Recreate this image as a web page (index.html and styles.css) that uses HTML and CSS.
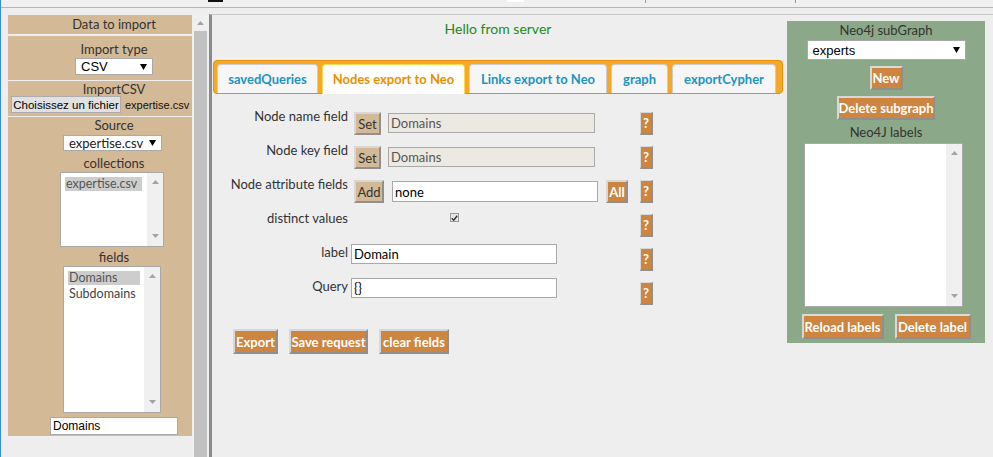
FILE: index.html
```html
<!DOCTYPE html>
<html lang="fr">
<head>
<meta charset="utf-8">
<title>Neo4j import</title>
<link rel="stylesheet" href="styles.css">
</head>
<body>
<div class="topbar">
  <span class="tb-mark tb-dark"></span>
  <span class="tb-mark tb-light"></span>
  <span class="tb-tick t1"></span>
  <span class="tb-tick t2"></span>
</div>
<div class="workspace">
  <aside class="leftpane">
    <div class="lp-clip">
      <section class="lp-sec lp-head">Data to import</section>
      <section class="lp-sec lp-type">
        <div class="lp-label">Import type</div>
        <div class="select sel-csv"><span>CSV</span><svg class="dd" width="7" height="6" viewBox="0 0 7 6"><path d="M0 0H7L3.5 6Z"/></svg></div>
      </section>
      <section class="lp-sec lp-file">
        <div class="lp-label">ImportCSV</div>
        <div class="file-row"><span class="file-btn">Choisissez un fichier</span><span class="file-name">expertise.csv</span></div>
      </section>
      <section class="lp-sec lp-source">
        <div class="lp-label">Source</div>
        <div class="select sel-src"><span>expertise.csv</span><svg class="dd" width="7" height="6" viewBox="0 0 7 6"><path d="M0 0H7L3.5 6Z"/></svg></div>
        <div class="lp-label lbl-coll">collections</div>
        <div class="listbox lb-coll">
          <div class="lb-items"><div class="lb-item sel">expertise.csv</div></div>
          <div class="lb-scroll"><svg width="7" height="4" viewBox="0 0 7 4"><path d="M0 4H7L3.5 0Z"/></svg><svg width="7" height="4" viewBox="0 0 7 4"><path d="M0 0H7L3.5 4Z"/></svg></div>
        </div>
        <div class="lp-label lbl-fields">fields</div>
        <div class="listbox lb-fields">
          <div class="lb-items"><div class="lb-item sel">Domains</div><div class="lb-item">Subdomains</div></div>
          <div class="lb-scroll"><svg width="7" height="4" viewBox="0 0 7 4"><path d="M0 4H7L3.5 0Z"/></svg><svg width="7" height="4" viewBox="0 0 7 4"><path d="M0 0H7L3.5 4Z"/></svg></div>
        </div>
        <input class="lp-input" type="text" value="Domains">
      </section>
    </div>
    <div class="vscroll">
      <div class="vs-up"><svg width="7" height="4" viewBox="0 0 7 4"><path d="M0 4H7L3.5 0Z"/></svg></div>
      <div class="vs-thumb"></div>
    </div>
  </aside>

  <main class="mainpane">
    <div class="center">
      <div class="hello">Hello from server</div>
      <nav class="tabs-nav">
        <div class="tab t-saved">savedQueries</div>
        <div class="tab t-nodes active">Nodes export to Neo</div>
        <div class="tab t-links">Links export to Neo</div>
        <div class="tab t-graph">graph</div>
        <div class="tab t-cypher">exportCypher</div>
      </nav>

      <div class="form">
        <div class="f-label">Node name field</div>
        <div class="f-ctrl"><button class="btn-tan b-set">Set</button><input class="f-input ro" type="text" value="Domains" readonly></div>
        <div class="f-help"><button class="btn help">?</button></div>

        <div class="f-label">Node key field</div>
        <div class="f-ctrl"><button class="btn-tan b-set">Set</button><input class="f-input ro" type="text" value="Domains" readonly></div>
        <div class="f-help"><button class="btn help">?</button></div>

        <div class="f-label">Node attribute fields</div>
        <div class="f-ctrl c-attr"><button class="btn-tan b-add">Add</button><input class="f-input attr" type="text" value="none"><button class="btn b-all">All</button></div>
        <div class="f-help"><button class="btn help">?</button></div>

        <div class="f-label">distinct values</div>
        <div class="f-ctrl"><span class="chk"><svg width="7" height="6" viewBox="0 0 7 6"><path d="M0.8 3.2L2.8 5.2L6.2 0.8" fill="none" stroke="#333" stroke-width="1.4"/></svg></span></div>
        <div class="f-help"><button class="btn help">?</button></div>

        <div class="f-label">label</div>
        <div class="f-ctrl c-plain"><input class="f-input plain" type="text" value="Domain"></div>
        <div class="f-help"><button class="btn help">?</button></div>

        <div class="f-label">Query</div>
        <div class="f-ctrl c-plain"><input class="f-input plain" type="text" value="{}"></div>
        <div class="f-help"><button class="btn help">?</button></div>
      </div>

      <div class="actions">
        <button class="btn b-export">Export</button>
        <button class="btn b-save">Save request</button>
        <button class="btn b-clear">clear fields</button>
      </div>
    </div>

    <div class="right">
      <div class="rp-label">Neo4j subGraph</div>
      <div class="select sel-graph"><span>experts</span><svg class="dd" width="7" height="6" viewBox="0 0 7 6"><path d="M0 0H7L3.5 6Z"/></svg></div>
      <button class="btn b-new">New</button>
      <button class="btn b-delsub">Delete subgraph</button>
      <div class="rp-label rp-labels">Neo4J labels</div>
      <div class="listbox lb-labels">
        <div class="lb-items"></div>
        <div class="lb-scroll"><svg width="7" height="4" viewBox="0 0 7 4"><path d="M0 4H7L3.5 0Z"/></svg><svg width="7" height="4" viewBox="0 0 7 4"><path d="M0 0H7L3.5 4Z"/></svg></div>
      </div>
      <div class="rp-buttons">
        <button class="btn b-reload">Reload labels</button>
        <button class="btn b-dellab">Delete label</button>
      </div>
    </div>
  </main>
</div>
</body>
</html>
```
FILE: styles.css
```css
* { box-sizing: border-box; }
html, body { margin: 0; padding: 0; }
body {
  width: 993px;
  height: 457px;
  overflow: hidden;
  background: #eeeeee;
  border-left: 1px solid #3b8ede;
  font-family: Lato, "Liberation Sans", sans-serif;
  font-size: 13px;
  color: #333;
}

/* top strip */
.topbar {
  height: 8px;
  background: #f0f0f0;
  border-bottom: 1px solid #b5b5b5;
  display: flex;
  align-items: flex-start;
}
.tb-mark { display: block; height: 2px; }
.tb-dark { width: 15px; background: #111; margin-left: 207px; }
.tb-light { width: 17px; background: #fff; margin-left: 284px; }
.tb-tick { display: block; width: 1px; height: 3px; background: #999; }
.tb-tick.t1 { margin-left: 121px; }
.tb-tick.t2 { margin-left: 149px; }

.workspace { display: flex; height: 449px; }

/* left pane */
.leftpane {
  width: 208px;
  flex: none;
  display: flex;
  padding: 7px 0 0 7px;
}
.lp-clip { width: 184px; flex: none; overflow: hidden; }
.lp-sec { width: 212px; background: #d4b996; text-align: center; }
.lp-head { height: 19px; line-height: 19px; margin-bottom: 2px; }
.lp-type { height: 44px; padding-top: 5px; margin-bottom: 1px; }
.lp-file { height: 35px; margin-bottom: 1px; }
.lp-source { height: 319px; }
.lp-label { line-height: 16px; }
.lbl-coll { margin-top: 4px; }
.lbl-fields { margin-top: 2px; }

.select {
  display: flex;
  align-items: center;
  justify-content: space-between;
  background: #fff;
  border: 1px solid #a9a9a9;
  padding: 0 5px;
  color: #000;
  font-family: "Liberation Sans", Arial, sans-serif;
  font-size: 13px;
  text-align: left;
}
.select .dd path { fill: #000; }
.sel-csv { width: 78px; height: 17px; margin: 1px 0 0 67px; }
.sel-src { width: 99px; height: 16px; margin: 2px 0 0 55px; font-family: Lato, sans-serif; color: #222; }
.sel-graph { width: 159px; height: 20px; margin-top: 2px; }

.file-row {
  display: flex;
  align-items: center;
  margin-top: -1px;
  padding-left: 3px;
  text-align: left;
  white-space: nowrap;
}
.file-btn {
  flex: none;
  width: 110px;
  height: 17px;
  background: #e1e1e1;
  border: 1px solid #adadad;
  font-family: "Liberation Sans", Arial, sans-serif;
  font-size: 11.5px;
  color: #000;
  display: flex;
  align-items: center;
  justify-content: center;
  white-space: nowrap;
}
.file-name {
  flex: none;
  margin-left: 4px;
  font-family: "Liberation Sans", Arial, sans-serif;
  font-size: 11px;
  color: #111;
}

.listbox {
  display: flex;
  background: #fff;
  border: 1px solid #a9a9a9;
  text-align: left;
}
.lb-items { flex: 1; padding: 4px 5px 4px 4px; }
.lb-item {
  height: 15px;
  line-height: 15px;
  padding-left: 1px;
  color: #444;
  white-space: nowrap;
  font-size: 12.5px;
}
.lb-item.sel { height: 14px; line-height: 14px; margin-bottom: 1px; background: #cdcdcd; color: #555; }
.lb-scroll {
  width: 16px;
  flex: none;
  background: #f0f0f0;
  display: flex;
  flex-direction: column;
  justify-content: space-between;
  align-items: center;
  padding: 7px 0 8px;
}
.lb-scroll path, .vs-up path { fill: #a3a3a3; }
.lb-coll { width: 104px; height: 75px; margin: 1px 0 0 52px; }
.lb-fields { width: 98px; height: 147px; margin: 1px 0 0 55px; }
.lb-fields .lb-items { padding-right: 4px; }
.lb-labels { width: 159px; height: 164px; margin: 3px 5px 0 0; }

.lp-input {
  display: block;
  width: 128px;
  height: 18px;
  margin: 4px 0 0 42px;
  border: 1px solid #a9a9a9;
  padding: 0 2px;
  background: #fff;
  font-family: "Liberation Sans", Arial, sans-serif;
  font-size: 12px;
  color: #000;
}

.vscroll {
  width: 17px;
  flex: none;
  background: #f0f0f0;
  display: flex;
  flex-direction: column;
}
.vs-up { height: 16px; display: flex; align-items: center; justify-content: center; }
.vs-thumb { flex: 1; margin: 0 2px; background: #c1c1c1; }

/* main pane */
.mainpane {
  flex: 1;
  display: flex;
  margin-top: 6px;
  border-top: 1px solid #c8c8c8;
  border-left: 3px solid #8a8a8a;
}
.center { width: 571px; flex: none; padding-left: 1px; }
.hello {
  margin-top: 5px;
  text-align: center;
  font-size: 14px;
  line-height: 18px;
  color: #228b22;
}

.tabs-nav {
  margin-top: 22px;
  height: 34px;
  display: flex;
  align-items: flex-start;
  gap: 4px;
  padding: 3px 3px 0;
  background: #f6a828;
  border: 1px solid #e78f08;
  border-radius: 4px;
}
.tab {
  height: 29px;
  line-height: 28px;
  text-align: center;
  background: #f6f6f6;
  border: 1px solid #cccccc;
  border-bottom: 0;
  border-radius: 4px 4px 0 0;
  color: #1c94c4;
  font-weight: bold;
  font-size: 13px;
  white-space: nowrap;
}
.tab.active {
  height: 30px;
  background: #fff;
  border-color: #fbd850;
  color: #eb8f00;
}
.t-saved { width: 101px; }
.t-nodes { width: 143px; }
.t-links { width: 138px; }
.t-graph { width: 57px; }
.t-cypher { width: 104px; }

.form {
  margin-top: 18px;
  display: grid;
  grid-template-columns: 135px 292px 13px;
  grid-auto-rows: 34px;
}
.f-label {
  text-align: right;
  line-height: 16px;
  margin-top: -4px;
  white-space: nowrap;
  color: #333;
}
.f-ctrl {
  display: flex;
  align-items: flex-start;
  gap: 7px;
  padding-left: 6px;
}
.c-attr { gap: 8px; }
.c-plain { padding-left: 3px; }

button {
  margin: 0;
  font-family: Lato, "Liberation Sans", sans-serif;
  font-size: 13px;
  padding: 0;
  cursor: default;
}
.btn, .btn-tan {
  border: 2px solid;
  border-color: #d8d8d8 #8f8f8f #8f8f8f #d8d8d8;
  display: flex;
  align-items: center;
  justify-content: center;
  white-space: nowrap;
}
.btn {
  background: #cd853f;
  color: #fff;
  font-weight: bold;
}
.btn-tan {
  background: #d4b996;
  color: #333;
  height: 23px;
}
.b-set { width: 27px; }
.b-add { width: 30px; }
.b-all { width: 22px; height: 23px; }
.help {
  width: 13px;
  height: 23px;
  border-width: 1px 2px 2px 1px;
}

.f-input {
  height: 20px;
  border: 1px solid #a9a9a9;
  padding: 0 2px;
  font-family: Lato, "Liberation Sans", sans-serif;
  font-size: 13px;
  color: #000;
  background: #fff;
  outline: none;
}
.f-input.ro {
  width: 207px;
  margin-top: 1px;
  background: #ebe9e2;
  color: #555;
}
.f-input.attr { width: 206px; height: 21px; margin-top: 1px; }
.f-input.plain { width: 206px; margin-top: -4px; }

.chk {
  width: 9px;
  height: 9px;
  margin: -1px 0 0 96px;
  border: 1px solid #9a9a9a;
  background: #e6e6e6;
  display: flex;
  align-items: center;
  justify-content: center;
}

.actions {
  display: flex;
  gap: 11px;
  margin-top: 13px;
  padding-left: 20px;
}
.actions .btn { height: 25px; }
.b-export { width: 45px; }
.b-save { width: 79px; }
.b-clear { width: 70px; }

/* right panel */
.right {
  flex: none;
  width: 198px;
  height: 322px;
  margin: 6px 0 0 4px;
  padding-top: 1px;
  background: #8ba888;
  display: flex;
  flex-direction: column;
  align-items: center;
}
.rp-label { line-height: 16px; color: #333; }
.rp-labels { margin-top: 4px; }
.b-new { width: 33px; height: 24px; margin-top: 6px; }
.b-delsub { width: 98px; height: 24px; margin-top: 6px; }
.rp-buttons { display: flex; gap: 11px; margin-top: 7px; }
.rp-buttons .btn { height: 25px; }
.b-reload { width: 82px; }
.b-dellab { width: 76px; }
```
